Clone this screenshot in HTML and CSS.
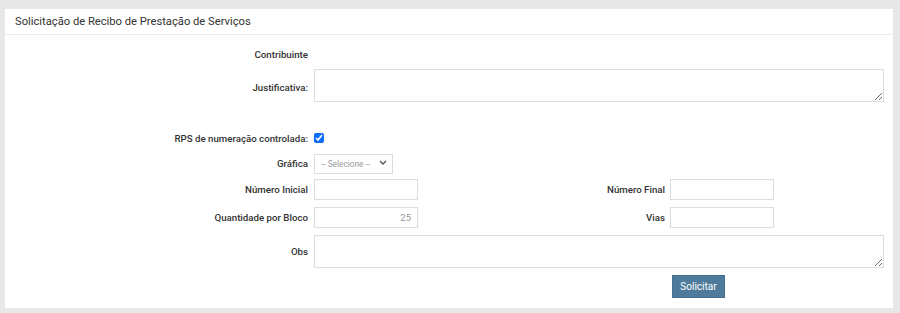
FILE: index.html
```html
<!DOCTYPE html>
<html lang="pt-BR">
<head>
    <meta charset="UTF-8">
    <meta name="viewport" content="width=device-width, initial-scale=1.0">
    <title>Solicitação de Recibo de Prestação de Serviços</title>
    <link rel="stylesheet" href="styles.css">
</head>
<body>
    <div class="panel">
        <div class="panel-heading">Solicitação de Recibo de Prestação de Serviços</div>

        <form class="panel-body" onsubmit="return false;">
            <div class="form-row row-contribuinte">
                <label class="form-label">Contribuinte</label>
            </div>

            <div class="form-row row-justificativa">
                <label class="form-label label-top" for="justificativa">Justificativa:</label>
                <textarea id="justificativa" class="form-textarea"></textarea>
            </div>

            <div class="form-row row-rps">
                <label class="form-label" for="rps">RPS de numeração controlada:</label>
                <input type="checkbox" id="rps" class="form-check" checked>
            </div>

            <div class="form-row row-grafica">
                <label class="form-label" for="grafica">Gráfica</label>
                <div class="select-wrap">
                    <select id="grafica" class="form-select">
                        <option>-- Selecione --</option>
                    </select>
                    <svg class="select-arrow" width="8" height="5" viewBox="0 0 8 5">
                        <path d="M1 1l3 3 3-3" fill="none" stroke="#555" stroke-width="1.4"/>
                    </svg>
                </div>
            </div>

            <div class="form-row row-pair">
                <label class="form-label" for="numInicial">Número Inicial</label>
                <input type="text" id="numInicial" class="form-input">
                <label class="form-label label-second" for="numFinal">Número Final</label>
                <input type="text" id="numFinal" class="form-input">
            </div>

            <div class="form-row row-pair">
                <label class="form-label" for="qtdBloco">Quantidade por Bloco</label>
                <input type="text" id="qtdBloco" class="form-input input-right" placeholder="25">
                <label class="form-label label-second" for="vias">Vias</label>
                <input type="text" id="vias" class="form-input">
            </div>

            <div class="form-row row-obs">
                <label class="form-label" for="obs">Obs</label>
                <textarea id="obs" class="form-textarea"></textarea>
            </div>

            <div class="form-row row-actions">
                <button type="submit" class="btn-solicitar">Solicitar</button>
            </div>
        </form>
    </div>
</body>
</html>
```

FILE: styles.css
```css
body {
    margin: 0;
    background: #e8e8e8;
    font-family: Roboto, "Liberation Sans", Arial, sans-serif;
    color: #333;
}

.panel {
    background: #fff;
    margin: 9px 7px 5px 5px;
    height: 299px;
    box-sizing: border-box;
}

.panel-heading {
    height: 25px;
    line-height: 26px;
    padding: 0 10px;
    font-size: 11.2px;
    border-bottom: 1px solid #ececec;
}

.panel-body {
    margin: 0;
    padding: 9px 0 11px 0;
}

.form-row {
    display: flex;
    align-items: center;
}

.form-label {
    width: 303px;
    padding-right: 6px;
    text-align: right;
    font-size: 9.7px;
    font-weight: 500;
    color: #333;
    flex-shrink: 0;
}

.label-second {
    width: 247px;
    padding-right: 5px;
}

.row-contribuinte {
    height: 20px;
}

.row-justificativa {
    margin-top: 5px;
}

.label-top {
    padding-top: 4px;
}

.form-textarea {
    width: 570px;
    height: 33px;
    box-sizing: border-box;
    border: 1px solid #ddd;
    margin: 0;
    padding: 4px 6px;
    font-family: inherit;
    font-size: 11px;
    resize: both;
}

.row-rps {
    margin-top: 28px;
    height: 16px;
}

.form-check {
    width: 10px;
    height: 10px;
    margin: 0;
    accent-color: #0d6efd;
}

.row-grafica {
    margin-top: 6px;
}

.select-wrap {
    position: relative;
}

.form-select {
    appearance: none;
    width: 79px;
    height: 20px;
    box-sizing: border-box;
    border: 1px solid #ddd;
    border-radius: 0;
    background: #fff;
    margin: 0;
    padding: 0 0 0 6px;
    font-family: inherit;
    font-size: 8.3px;
    color: #999;
}

.select-arrow {
    position: absolute;
    right: 6px;
    top: 8px;
    pointer-events: none;
}

.row-pair {
    margin-top: 5px;
}

.row-pair + .row-pair {
    margin-top: 7px;
}

.form-input {
    width: 104px;
    height: 21px;
    box-sizing: border-box;
    border: 1px solid #ddd;
    margin: 0;
    padding: 0 6px;
    font-family: inherit;
    font-size: 9.5px;
}

.input-right {
    text-align: right;
}

.input-right::placeholder {
    color: #999;
}

.row-obs {
    margin-top: 7px;
}

.row-actions {
    margin-top: 7px;
    padding-left: 667px;
}

.btn-solicitar {
    width: 53px;
    height: 23px;
    background: #4f7a9c;
    border: 1px solid #46708f;
    color: #fff;
    font-family: inherit;
    font-size: 10px;
    padding: 0;
    cursor: pointer;
}
```
